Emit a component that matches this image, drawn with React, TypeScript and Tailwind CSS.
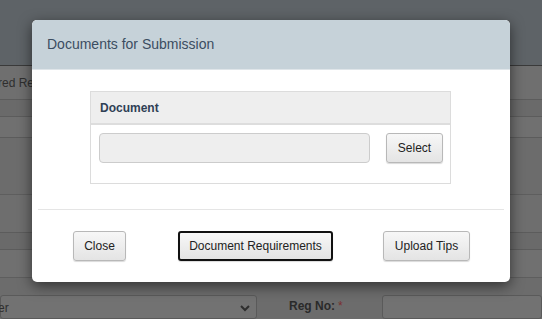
import React from "react";

const btn =
  "h-[30px] rounded-[3px] border border-[#b8b8b8] bg-gradient-to-b from-[#f7f7f7] to-[#e4e4e4] text-[12px] text-[#222] shadow-[0_1px_1px_rgba(0,0,0,0.15)]";

export default function App() {
  return (
    <div
      className="relative w-[542px] h-[319px] overflow-hidden bg-[#6c6c6c]"
      style={{ fontFamily: '"Liberation Sans", Arial, sans-serif' }}
    >
      {/* background page */}
      <div className="flex flex-col h-full">
        <div className="h-[66px] bg-[#5e6367] border-b border-[#3a3a3a]" />
        <div className="h-[34px] border-b border-[#5c5c5c] bg-[#6f6f6f] flex items-center pl-0">
          <span className="text-[12px] text-[#2e2e2e] -ml-[2px]">red Re</span>
        </div>
        <div className="h-[17px] border-b border-[#5c5c5c] bg-[#6a6a6a]" />
        <div className="h-[21px] border-b border-[#5c5c5c] bg-[#707070]" />
        <div className="h-[57px] border-b border-[#5e5e5e] bg-[#6c6c6c]" />
        <div className="h-[38px] border-b border-[#5c5c5c] bg-[#6e6e6e]" />
        <div className="h-[17px] border-b border-[#5c5c5c] bg-[#6a6a6a]" />
        <div className="h-[28px] border-b border-[#5e5e5e] bg-[#707070]" />
        <div className="h-[17px] bg-[#6c6c6c]" />
        <div className="flex h-[24px]">
          <div className="w-[257px] border border-[#5a5a5a] rounded-[3px] bg-[#727272] flex items-center justify-between pl-0 pr-[5px]">
            <span className="text-[12px] text-[#2e2e2e] -ml-[3px] mt-[2px]">er</span>
            <svg width="12" height="8" viewBox="0 0 12 8" className="mt-[2px]">
              <path d="M2 2 L6 6 L10 2" stroke="#2e2e2e" strokeWidth="2" fill="none" />
            </svg>
          </div>
          <div className="w-[125px] flex items-start justify-start pl-[32px] pt-[2px]">
            <span className="text-[12px] font-bold text-[#2a2a2a]">Reg No:</span>
            <span className="text-[12px] text-[#7a3030] ml-[3px]">*</span>
          </div>
          <div className="flex-1 border border-[#5a5a5a] rounded-[3px] bg-[#727272]" />
        </div>
      </div>

      {/* modal */}
      <div className="absolute left-[32px] top-[20px] w-[478px] h-[262px] bg-white rounded-[5px] overflow-hidden shadow-[0_4px_14px_rgba(0,0,0,0.55)] flex flex-col">
        <div className="h-[50px] bg-[#c6d2d9] border-b border-[#dfe5e9] flex items-center pl-[15px]">
          <span className="text-[14px] text-[#3b4d61]">Documents for Submission</span>
        </div>
        <div className="flex pt-[21px] pl-[58px] h-[139px]">
          <div className="w-[361px] h-[93px] border border-[#dcdcdc] flex flex-col">
            <div className="h-[33px] bg-[#eeeeee] border-b-2 border-[#dddddd] flex items-center pl-[9px]">
              <span className="text-[12px] font-bold text-[#2f4055]">Document</span>
            </div>
            <div className="flex items-start pt-[8px] pl-[8px]">
              <div className="w-[271px] h-[30px] bg-[#eeeeee] border border-[#cccccc] rounded-[4px]" />
              <button className={btn + " ml-[16px] w-[57px]"}>Select</button>
            </div>
          </div>
        </div>
        <div className="mx-[6px] border-t border-[#e5e5e5]" />
        <div className="flex items-start pt-[21px] pl-[41px]">
          <button className={btn + " w-[53px]"}>Close</button>
          <button className="ml-[52px] w-[155px] h-[30px] rounded-[3px] border-2 border-[#111] bg-gradient-to-b from-[#f7f7f7] to-[#e4e4e4] text-[12px] text-[#222] shadow-[0_1px_1px_rgba(0,0,0,0.15)]">
            Document Requirements
          </button>
          <button className={btn + " ml-[50px] w-[87px]"}>Upload Tips</button>
        </div>
      </div>
    </div>
  );
}
